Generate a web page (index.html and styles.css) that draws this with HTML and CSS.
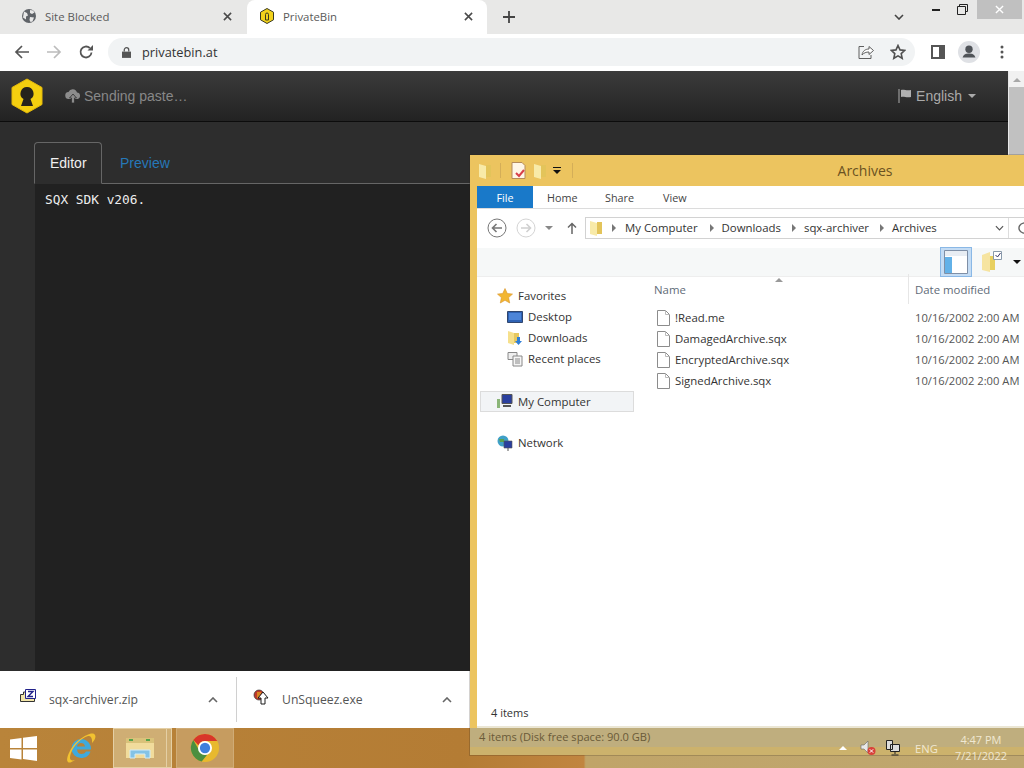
FILE: index.html
```html
<!DOCTYPE html>
<html lang="en">
<head>
<meta charset="utf-8">
<title>PrivateBin</title>
<link rel="stylesheet" href="styles.css">
</head>
<body>
<div class="screen">
  <div class="chrome">
    <div class="tabstrip">
      <div class="tab tab-bg">
        <svg class="fav" viewBox="0 0 16 16"><circle cx="8" cy="8" r="7" fill="#5f6368"/><path d="M3 3.500l3 1.500 1 2.500-2 1v3l-3-2zM9 2l3 .5 1.500 2-2.500 1.500-2-1zM9 9l4 .5-1.500 4-2 .5-1-2z" fill="#e8e8e8"/></svg>
        <span class="tab-title">Site Blocked</span>
        <svg class="tab-x" viewBox="0 0 10 10"><path d="M1 1l8 8M9 1l-8 8" stroke="#4a4a4a" stroke-width="1.700"/></svg>
      </div>
      <div class="tab tab-active">
        <svg class="fav" viewBox="0 0 16 16"><path d="M8 .5l6.500 3.700v7.600L8 15.500 1.500 11.800V4.200z" fill="#f2d21b" stroke="#3a3a20"/><path d="M6.500 12V6.500a1.500 1.500 0 0 1 3 0V12z" fill="none" stroke="#3a3a20"/></svg>
        <span class="tab-title">PrivateBin</span>
        <svg class="tab-x" viewBox="0 0 10 10"><path d="M1 1l8 8M9 1l-8 8" stroke="#4a4a4a" stroke-width="1.700"/></svg>
      </div>
      <svg class="new-tab" viewBox="0 0 12 12"><path d="M6 0v12M0 6h12" stroke="#444" stroke-width="1.800"/></svg>
      <div class="spacer"></div>
      <svg class="tab-menu" viewBox="0 0 10 6"><path d="M1 1l4 4 4-4" fill="none" stroke="#444" stroke-width="1.600"/></svg>
      <div class="win-controls">
        <span class="wc wc-min"><i class="wc-min-bar"></i></span>
        <span class="wc wc-max"><svg viewBox="0 0 11 11" class="wc-max-icon"><path d="M2.500 2.500V.5h8v7h-2M.5 2.500h8v8h-8z" fill="none" stroke="#222"/></svg></span>
        <span class="wc wc-close"><svg viewBox="0 0 10 10" class="wc-close-icon"><path d="M1 1l8 8M9 1l-8 8" stroke="#fff" stroke-width="1.500"/></svg></span>
      </div>
    </div>
    <div class="toolbar">
      <svg class="tb-ico" viewBox="0 0 16 16"><path d="M15 8H2M8 2L2 8l6 6" fill="none" stroke="#555" stroke-width="1.700"/></svg>
      <svg class="tb-ico" viewBox="0 0 16 16"><path d="M1 8h13M8 2l6 6-6 6" fill="none" stroke="#bcbcbc" stroke-width="1.700"/></svg>
      <svg class="tb-ico" viewBox="0 0 16 16"><path d="M13.500 8.500A5.500 5.500 0 1 1 11.800 4" fill="none" stroke="#555" stroke-width="1.800"/><path d="M9.500 6.500H15V1z" fill="#555"/></svg>
      <div class="omnibox">
        <svg class="lock" viewBox="0 0 10 12"><path d="M0 5h10v7H0z" fill="#555"/><path d="M2.500 5V3.200a2.500 2.500 0 0 1 5 0V5" fill="none" stroke="#555" stroke-width="1.400"/></svg>
        <span class="url">privatebin.at</span>
        <div class="spacer"></div>
        <svg class="omni-ico" viewBox="0 0 16 16"><path d="M6 2.500H1v12h12V11" fill="none" stroke="#5f5f5f"/><path d="M4 11c.500-4 3.500-6 7-6V2.500L15.500 6.500 11 10.500V8c-3 0-5 .8-7 3z" fill="#fff" stroke="#5f5f5f"/></svg>
        <svg class="omni-ico" viewBox="0 0 16 16"><path d="M8 1.500l2 4.400 4.700.5-3.500 3.200 1 4.700L8 11.900l-4.200 2.400 1-4.700L1.300 6.400 6 5.900z" fill="none" stroke="#505050" stroke-width="1.600"/></svg>
      </div>
      <svg class="side-ico" viewBox="0 0 14 14"><path d="M0 0h14v14H0z" fill="#555"/><path d="M2 2h6v10H2z" fill="#fff"/></svg>
      <span class="avatar"><svg viewBox="0 0 24 24" class="avatar-ico"><circle cx="12" cy="9" r="4" fill="#4f5358"/><path d="M5 18c1-4 4-4.500 7-4.500s6 .5 7 4.500z" fill="#4f5358"/></svg></span>
      <svg class="dots" viewBox="0 0 4 14"><circle cx="2" cy="2" r="1.500" fill="#555"/><circle cx="2" cy="7" r="1.500" fill="#555"/><circle cx="2" cy="12" r="1.500" fill="#555"/></svg>
    </div>
    <div class="viewport">
      <div class="page">
        <div class="navbar">
          <svg class="logo" viewBox="0 0 34 36"><path d="M17 1l15 8.500v17L17 35 2 26.500v-17z" fill="#f4cf0f" stroke="#e4b90a"/><path d="M17 9a6.500 6.500 0 0 1 3.500 12l2.500 7H11l2.500-7A6.500 6.500 0 0 1 17 9z" fill="#26231c"/></svg>
          <svg class="nav-cloud" viewBox="0 0 16 14"><path d="M4 10a3.500 3.500 0 0 1-.5-7A4.500 4.500 0 0 1 12 3.500 3.300 3.300 0 0 1 12.500 10z" fill="#8c8c8c"/><path d="M8 5l3.500 4H9.500v5h-3V9H4.500z" fill="#8c8c8c" stroke="#2e2e2e" stroke-width=".8"/></svg>
          <span class="nav-status">Sending paste…</span>
          <div class="spacer"></div>
          <svg class="nav-flag" viewBox="0 0 14 14"><path d="M1 0v14" stroke="#999" stroke-width="1.200"/><path d="M3 1c3-1 5 1 10 0v7c-5 1-7-1-10 0z" fill="#b0b0b0"/></svg>
          <span class="nav-lang">English</span>
          <i class="caret"></i>
        </div>
        <div class="main">
          <div class="tabs">
            <span class="p-tab p-tab-active">Editor</span>
            <span class="p-tab p-tab-link">Preview</span>
          </div>
          <div class="editor">SQX SDK v206.</div>
        </div>
      </div>
      <div class="scrollbar">
        <i class="sb-up"></i>
        <i class="sb-thumb"></i>
      </div>
    </div>
  </div>
  <div class="downloads">
    <div class="dl dl-first">
      <svg class="dl-ico" viewBox="0 0 16 16"><path d="M.5 5.500h3V3h11v9.500H.5z" fill="#f3e6a8" stroke="#333"/><path d="M5.500.5h10v9h-10z" fill="#fff" stroke="#22228a"/><path d="M8 2.500h5L8 7.500h5" fill="none" stroke="#22228a" stroke-width="1.400"/></svg>
      <span class="dl-name">sqx-archiver.zip</span>
      <div class="spacer"></div>
      <svg class="dl-chev" viewBox="0 0 10 6"><path d="M1 5l4-4 4 4" fill="none" stroke="#666" stroke-width="1.600"/></svg>
    </div>
    <div class="dl dl-second">
      <svg class="dl-ico" viewBox="0 0 16 16"><circle cx="6" cy="6" r="5" fill="#c0392b" stroke="#333" stroke-width=".7"/><path d="M4 4h4M4 6h3M4 8h4" stroke="#f2d21b"/><path d="M10 3l5 6h-3v6H8V9H5z" fill="#fff" stroke="#1a1a1a"/></svg>
      <span class="dl-name">UnSqueez.exe</span>
      <div class="spacer"></div>
      <svg class="dl-chev" viewBox="0 0 10 6"><path d="M1 5l4-4 4 4" fill="none" stroke="#666" stroke-width="1.600"/></svg>
    </div>
  </div>
  <div class="taskbar">
    <svg class="start" viewBox="0 0 27 25"><path d="M0 3.500L11.500 2v10H0zM13 1.800L27 0v12H13zM0 13.500h11.500v10L0 22zM13 13.500h14V25l-14-2z" fill="#fff"/></svg>
    <svg class="tb-ie" viewBox="0 0 32 32"><path d="M16 7a10 10 0 0 1 10 10.500H12c.3 3 2 4.500 4.500 4.500 2 0 3.500-.8 4.500-2.500h4.500C24 24 20.500 26 16 26A9.500 9.500 0 0 1 16 7zm-4 7.500h8c-.2-2.500-2-3.500-4-3.500s-3.700 1.200-4 3.500z" fill="#3fa9dc"/><path d="M3 30C0 27 6 14 14 8s14-8 16-5c1.500 2.500-1 6-3 8 .5-3-.500-7-3-7-5 0-18 10-19 22 0 2 2 3 5 2-3 2-6 3.500-7 2z" fill="#f2c230"/></svg>
    <div class="tb-btn tb-explorer">
      <svg class="tb-folder" viewBox="0 0 30 28"><path d="M1 4h28v20H1z" fill="#f1dc9c"/><path d="M1 4h28v5H1z" fill="#d9c27a"/><path d="M4 6h4M21 6h4" stroke="#53a34a" stroke-width="2"/><path d="M5 24v-8h20v8h-5v-4H10v4z" fill="#84c3e6" stroke="#d3ecf7"/></svg>
    </div>
    <i class="tb-sliver"></i>
    <div class="tb-btn tb-chrome">
      <svg class="tb-chrome-ico" viewBox="0 0 32 32"><circle cx="16" cy="16" r="15" fill="#e8b92e"/><path d="M16 1a15 15 0 0 1 13 7.500H16a7.500 7.500 0 0 0-7 4.500L3.500 7.500A15 15 0 0 1 16 1z" fill="#d8362a"/><path d="M3.500 7.500L10 19a7.500 7.500 0 0 0 8.500 4L12.500 30.500A15 15 0 0 1 3.500 7.500z" fill="#4b8f3f"/><circle cx="16" cy="16" r="7.500" fill="#fff"/><circle cx="16" cy="16" r="5.500" fill="#3f7fdc"/></svg>
    </div>
    <div class="spacer"></div>
    <div class="tray">
      <i class="tray-up"></i>
      <svg class="tray-ico" viewBox="0 0 16 16"><path d="M1 5h3l4-4v12L4 9H1z" fill="#e8e8e8" stroke="#666" stroke-width=".6"/><circle cx="11.500" cy="11" r="4" fill="#d8413a"/><path d="M9.800 9.300l3.400 3.400M13.200 9.300l-3.400 3.400" stroke="#fff"/></svg>
      <svg class="tray-ico" viewBox="0 0 16 16"><path d="M1.500.5h6v9h-6zM5.500 4.500h9v7h-9z" fill="#ddd" stroke="#222"/><path d="M10 11.500v2.500M6.500 15h7" stroke="#222"/></svg>
      <span class="tray-lang">ENG</span>
      <div class="tray-clock"><span>4:47 PM</span><span>7/21/2022</span></div>
    </div>
  </div>
  <div class="explorer">
    <div class="ex-title">
      <div class="qat">
        <svg class="qat-ico" viewBox="0 0 14 16"><path d="M1 1l7 2v13l-7-2z" fill="#f8eaa8"/><path d="M8 2h5v12H8z" fill="#e3c45a"/></svg>
        <i class="qat-sep qat-sep-a"></i>
        <svg class="qat-doc" viewBox="0 0 15 17"><path d="M1 .5h10l3 3v13H1z" fill="#fff6e6" stroke="#b58b5a"/><path d="M5 11l3 3 5-6" fill="none" stroke="#d8404a" stroke-width="2"/></svg>
        <svg class="qat-ico qat-folder2" viewBox="0 0 14 16"><path d="M1 1l7 2v13l-7-2z" fill="#f8eaa8"/><path d="M8 2h5v12H8z" fill="#e3c45a"/></svg>
        <svg class="qat-drop" viewBox="0 0 8 7"><path d="M0 0h8v1H0zM0 3h8L4 7z" fill="#111"/></svg>
        <i class="qat-sep qat-sep-b"></i>
      </div>
      <span class="ex-title-text">Archives</span>
    </div>
    <div class="ex-inner">
      <div class="ribbon">
        <span class="rb-tab rb-file">File</span>
        <span class="rb-tab">Home</span>
        <span class="rb-tab">Share</span>
        <span class="rb-tab">View</span>
      </div>
      <div class="addr-row">
        <svg class="ab-back" viewBox="0 0 20 20"><circle cx="10" cy="10" r="9" fill="#fff" stroke="#777"/><path d="M15 10H6M9.500 6L5.500 10l4 4" fill="none" stroke="#777" stroke-width="1.600"/></svg>
        <svg class="ab-fwd" viewBox="0 0 20 20"><circle cx="10" cy="10" r="9" fill="#fff" stroke="#d4d4d4"/><path d="M5 10h9M10.500 6l4 4-4 4" fill="none" stroke="#d0d0d0" stroke-width="1.600"/></svg>
        <i class="ab-drop"></i>
        <svg class="ab-up" viewBox="0 0 10 12"><path d="M5 12V1.500M1 5.500l4-4 4 4" fill="none" stroke="#666" stroke-width="1.500"/></svg>
        <div class="addr">
          <svg class="addr-folder" viewBox="0 0 14 16"><path d="M1 1l7 2v13l-7-2z" fill="#f8eaa8"/><path d="M8 2h5v12H8z" fill="#e3c45a"/></svg>
          <i class="crumb-arrow crumb-arrow-first"></i><span class="crumb crumb-first">My Computer</span>
          <i class="crumb-arrow"></i><span class="crumb">Downloads</span>
          <i class="crumb-arrow"></i><span class="crumb">sqx-archiver</span>
          <i class="crumb-arrow"></i><span class="crumb">Archives</span>
          <div class="spacer"></div>
          <svg class="addr-chev" viewBox="0 0 10 6"><path d="M1 1l4 4 4-4" fill="none" stroke="#555" stroke-width="1.300"/></svg>
          <i class="addr-div"></i>
          <svg class="addr-refresh" viewBox="0 0 14 14"><path d="M12 7a5 5 0 1 1-1.500-3.500" fill="none" stroke="#666" stroke-width="1.400"/><path d="M8.500 4.500H13V0z" fill="#666"/></svg>
        </div>
      </div>
      <div class="cmd-row">
        <span class="layout-btn"><svg viewBox="0 0 24 24" class="layout-ico"><path d="M.5 .5h23v23H.5z" fill="#fff" stroke="#7f8fa6"/><path d="M1 1h22v5H1z" fill="#e8edf3"/><path d="M1 7h7v16H1z" fill="#62b1e8"/></svg></span>
        <svg class="opt-ico" viewBox="0 0 22 24"><path d="M1 5l8-3v20l-8-2z" fill="#f6e4a0"/><path d="M9 6h5v14H9z" fill="#e8d060"/><path d="M12.500 1.500h8v8h-8z" fill="#fff" stroke="#8899aa"/><path d="M14.500 5l2 2 3-4" fill="none" stroke="#336" /></svg>
        <i class="opt-drop"></i>
      </div>
      <div class="ex-body">
        <div class="ex-nav">
          <div class="nav-row nav-top"><svg class="nav-ico" viewBox="0 0 16 16"><path d="M8 .5l2.300 5 5.200.6-3.900 3.500 1.100 5.400L8 12.300 3.300 15l1.100-5.400L.5 6.100l5.200-.6z" fill="#f2b632" stroke="#d9932a" stroke-width=".6"/></svg>Favorites</div>
          <div class="nav-row nav-sub"><svg class="nav-ico" viewBox="0 0 16 16"><path d="M.5 2.500h15v11H.5z" fill="#2e62b4" stroke="#30466e"/><path d="M2 4h12v7H2z" fill="#4d85d8"/></svg>Desktop</div>
          <div class="nav-row nav-sub"><svg class="nav-ico" viewBox="0 0 16 16"><path d="M1 1l6 2v12l-6-2z" fill="#f6e08c"/><path d="M7 3h5v10H7z" fill="#e6c860"/><path d="M10 7h3v4h2l-3.500 4L8 11h2z" fill="#2f7fd8"/></svg>Downloads</div>
          <div class="nav-row nav-sub"><svg class="nav-ico" viewBox="0 0 16 16"><path d="M1 1.500h9v7H1z" fill="#eee" stroke="#888"/><path d="M6 5h9v10H6z" fill="#f5f5f5" stroke="#888"/><path d="M8 8h5M8 10h5M8 12h5" stroke="#888"/></svg>Recent places</div>
          <div class="nav-row nav-top nav-group nav-selected"><svg class="nav-ico" viewBox="0 0 16 16"><path d="M5 1.500h10v9H5z" fill="#2a3f9e" stroke="#555"/><path d="M0 6h3v9H0z" fill="#8ab578"/><path d="M6 13h8" stroke="#555" stroke-width="2"/></svg>My Computer</div>
          <div class="nav-row nav-top nav-group"><svg class="nav-ico" viewBox="0 0 16 16"><circle cx="6" cy="6" r="5.500" fill="#3fa0c8"/><path d="M2 4h5v3H3z" fill="#5aa050"/><path d="M7 6h8v7H7z" fill="#2a3f9e" stroke="#555" stroke-width=".6"/><path d="M11 13v3" stroke="#555"/></svg>Network</div>
        </div>
        <div class="ex-files">
          <div class="col-head">
            <span class="col-name">Name</span>
            <i class="sort-mark"></i>
            <span class="col-date">Date modified</span>
          </div>
          <div class="file-row"><svg class="file-ico" viewBox="0 0 13 16"><path d="M.5 .5h8l4 4v11H.5z" fill="#fff" stroke="#8c8c8c"/><path d="M8.500 .5v4h4" fill="none" stroke="#bbb"/></svg><span class="file-name">!Read.me</span><span class="file-date">10/16/2002 2:00 AM</span></div>
          <div class="file-row"><svg class="file-ico" viewBox="0 0 13 16"><path d="M.5 .5h8l4 4v11H.5z" fill="#fff" stroke="#8c8c8c"/><path d="M8.500 .5v4h4" fill="none" stroke="#bbb"/></svg><span class="file-name">DamagedArchive.sqx</span><span class="file-date">10/16/2002 2:00 AM</span></div>
          <div class="file-row"><svg class="file-ico" viewBox="0 0 13 16"><path d="M.5 .5h8l4 4v11H.5z" fill="#fff" stroke="#8c8c8c"/><path d="M8.500 .5v4h4" fill="none" stroke="#bbb"/></svg><span class="file-name">EncryptedArchive.sqx</span><span class="file-date">10/16/2002 2:00 AM</span></div>
          <div class="file-row"><svg class="file-ico" viewBox="0 0 13 16"><path d="M.5 .5h8l4 4v11H.5z" fill="#fff" stroke="#8c8c8c"/><path d="M8.500 .5v4h4" fill="none" stroke="#bbb"/></svg><span class="file-name">SignedArchive.sqx</span><span class="file-date">10/16/2002 2:00 AM</span></div>
        </div>
      </div>
      <div class="ex-count">4 items</div>
    </div>
    <div class="ex-status">4 items (Disk free space: 90.0 GB)</div>
    <div class="ex-foot"></div>
  </div>
</div>
</body>
</html>
```
FILE: styles.css
```css
* { box-sizing: border-box; }
html, body { margin: 0; padding: 0; }
body { width: 1024px; height: 768px; overflow: hidden; background: #000; }
i { display: block; font-style: normal; }
svg { display: block; flex: none; }
.spacer { flex: 1; }
.screen { position: relative; width: 1024px; height: 768px; overflow: hidden; display: flex; flex-direction: column; font-family: "Open Sans", "Noto Sans", sans-serif; }

.chrome { height: 671px; display: flex; flex-direction: column; flex: none; }
.tabstrip { height: 34px; background: #e8e8e7; display: flex; align-items: flex-start; flex: none; }
.tab { height: 34px; display: flex; align-items: center; font-size: 11.400px; color: #5a5a5a; width: 240px; flex: none; }
.tab-bg { width: 247px; padding: 0 15px 2px 21px; }
.tab-active { width: 240px; background: #fff; border-radius: 8px 8px 0 0; padding: 0 14px 2px 12px; }
.fav { width: 16px; height: 16px; }
.tab-title { margin-left: 8px; flex: 1; }
.tab-x { width: 9px; height: 9px; }
.new-tab { width: 12px; height: 12px; margin: 11px 0 0 16px; }
.tab-menu { width: 10px; height: 6px; margin: 14px 19px 0 0; }
.win-controls { display: flex; height: 19px; margin-right: 2px; }
.wc { display: flex; align-items: center; justify-content: center; height: 19px; width: 26px; flex: none; }
.wc-close { width: 45px; margin-left: 2px; background: #c0c0c0; }
.wc-min-bar { width: 8px; height: 2px; background: #222; }
.wc-max-icon { width: 11px; height: 11px; }
.wc-close-icon { width: 9px; height: 9px; }

.toolbar { height: 37px; background: #fff; display: flex; align-items: center; flex: none; padding: 0 0 1px 14px; }
.tb-ico { width: 16px; height: 16px; margin-right: 16px; }
.omnibox { margin-left: -2px; flex: none; width: 807px; height: 28px; border-radius: 14px; background: #f1f3f4; display: flex; align-items: center; padding: 0 9px 0 14px; }
.lock { width: 9px; height: 11px; }
.url { margin-left: 11px; font-size: 12.800px; color: #333; }
.omni-ico { width: 16px; height: 16px; margin-left: 16px; }
.side-ico { width: 14px; height: 14px; margin-left: 16px; }
.avatar { width: 22px; height: 22px; border-radius: 50%; background: #dfe1e5; margin-left: 13px; flex: none; display: block; }
.avatar-ico { width: 22px; height: 22px; }
.dots { width: 4px; height: 14px; margin-left: 20px; }

.viewport { flex: 1; display: flex; min-height: 0; }
.page { flex: 1; background: #2d2d2d; display: flex; flex-direction: column; }
.navbar { height: 51px; flex: none; background: linear-gradient(#3b3b3b, #222222); border-bottom: 1px solid #0c0c0c; display: flex; align-items: center; padding: 0 32px 0 10px; font-family: "Liberation Sans", Arial, sans-serif; font-size: 14px; color: #888; }
.logo { width: 34px; height: 36px; }
.nav-cloud { width: 16px; height: 14px; margin-left: 21px; }
.nav-status { margin-left: 3px; }
.nav-flag { width: 14px; height: 14px; }
.nav-lang { margin-left: 4px; color: #aaa; }
.caret { width: 0; height: 0; border: 4px solid transparent; border-top-color: #aaa; border-bottom: 0; margin-left: 6px; }
.main { flex: 1; padding: 20px 0 0 34px; display: flex; flex-direction: column; min-height: 0; }
.tabs { display: flex; height: 42px; flex: none; border-bottom: 1px solid #666; font-family: "Liberation Sans", Arial, sans-serif; font-size: 14px; }
.p-tab { height: 42px; display: flex; align-items: center; padding: 0 15px; }
.p-tab-active { width: 68px; border: 1px solid #666; border-bottom-color: #2d2d2d; border-radius: 4px 4px 0 0; color: #f0f0f0; }
.p-tab-link { color: #2678b8; padding-left: 18px; }
.editor { flex: 1; background: #212121; margin-left: 1px; padding: 7px 10px; font-family: "DejaVu Sans Mono", monospace; font-size: 12.800px; color: #eeeeee; line-height: 17px; }
.scrollbar { width: 16px; flex: none; background: #f1f1f1; display: flex; flex-direction: column; align-items: center; border-left: 1px solid #e8e8e8; }
.sb-up { width: 0; height: 0; border: 4px solid transparent; border-bottom-color: #a8a8a8; border-top: 0; margin-top: 7px; }
.sb-thumb { width: 15px; height: 120px; background: #c1c1c1; margin-top: 5px; }

.downloads { height: 57px; flex: none; background: #fff; display: flex; align-items: center; }
.dl { width: 236px; height: 45px; display: flex; align-items: center; flex: none; font-size: 12.200px; color: #555; padding: 0 18px 0 20px; }
.dl-second { border-left: 1px solid #d0d0d0; width: 234px; padding-left: 16px; }
.dl-ico { width: 16px; height: 16px; margin-top: -6px; }
.dl-name { margin-left: 13px; }
.dl-chev { width: 10px; height: 6px; }

.taskbar { height: 40px; flex: none; background: linear-gradient(90deg, #b9843a 0, #b47c34 45%, #c18540 57%, #c0a468 57.200%, #bfa770 100%); display: flex; align-items: center; }
.start { width: 27px; height: 25px; margin-left: 10px; }
.tb-ie { width: 32px; height: 32px; margin-left: 28px; }
.tb-btn { height: 40px; display: flex; align-items: center; justify-content: center; flex: none; }
.tb-explorer { width: 54px; margin-left: 16px; background: #cfae74; border: 1px solid #e4cfa5; }
.tb-folder { width: 30px; height: 28px; }
.tb-sliver { width: 5px; height: 40px; background: #cfae74; border: 1px solid #e4cfa5; border-left: 0; }
.tb-chrome { width: 58px; margin-left: 4px; background: #c69c60; border: 1px solid #d0ac76; }
.tb-chrome-ico { width: 30px; height: 30px; }
.tray { position: relative; z-index: 2; display: flex; align-items: center; color: #f0e8d2; font-size: 11px; padding-right: 17px; }
.tray-up { width: 0; height: 0; border: 4px solid transparent; border-bottom-color: #fff; border-top: 0; margin-right: 13px; }
.tray-ico { width: 16px; height: 16px; margin-right: 9px; }
.tray-lang { margin: 0 17px 0 5px; font-size: 11.200px; }
.tray-clock { display: flex; flex-direction: column; align-items: center; line-height: 16px; }

.explorer { position: absolute; left: 470px; top: 155px; width: 790px; height: 600px; background: #ecc45f; display: flex; flex-direction: column; box-shadow: 0 0 0 1px rgba(40,30,20,.2); }
.ex-title { height: 31px; flex: none; display: flex; align-items: center; justify-content: center; position: relative; }
.qat { position: absolute; left: 8px; top: 7px; display: flex; align-items: center; }
.qat-ico { width: 14px; height: 16px; }
.qat-doc { width: 15px; height: 17px; margin-left: 10px; }
.qat-folder2 { margin-left: 7px; }
.qat-sep { width: 1px; height: 15px; background: #d4ae58; }
.qat-sep-a { margin-left: 8px; }
.qat-sep-b { margin-left: 11px; }
.qat-drop { width: 8px; height: 7px; margin-left: 6px; }
.ex-title-text { font-size: 14px; color: #6a5222; }
.ex-inner { margin: 0 0 0 7px; background: #fff; height: 542px; flex: none; border-bottom: 2px solid #ebe6d4; display: flex; flex-direction: column; font-size: 11.400px; color: #333; }
.ribbon { height: 23px; flex: none; display: flex; align-items: stretch; background: #fff; border-bottom: 1px solid #dcdcdc; }
.rb-tab { display: flex; align-items: center; padding: 0 0 0 14px; width: 57px; font-size: 10.800px; color: #444; }
.rb-tab + .rb-tab { width: 58px; }
.rb-file { width: 56px; background: #1979c9; color: #fff; justify-content: center; padding: 0; }
.addr-row { height: 39px; flex: none; display: flex; align-items: center; padding: 0 0 2px 10px; }
.ab-back { width: 20px; height: 20px; }
.ab-fwd { width: 20px; height: 20px; margin-left: 9px; }
.ab-drop { width: 0; height: 0; border: 4px solid transparent; border-top-color: #888; border-bottom: 0; margin-left: 9px; }
.ab-up { width: 10px; height: 12px; margin-left: 14px; }
.addr { width: 452px; height: 22px; border: 1px solid #d2d2d2; margin-left: 8px; display: flex; align-items: center; padding-left: 3px; color: #333; }
.addr-folder { width: 14px; height: 16px; }
.crumb-arrow { width: 0; height: 0; border: 4px solid transparent; border-left-color: #777; border-right: 0; margin: 0 8px 0 11px; }
.crumb-arrow-first { margin: 0 9px; }
.crumb { font-size: 11.400px; }
.crumb-first { margin-right: 1px; }
.addr-chev { width: 9px; height: 6px; }
.addr-div { width: 1px; height: 20px; background: #ddd; margin-left: 4px; }
.addr-refresh { width: 14px; height: 14px; margin: 0 5px 0 8px; }
.cmd-row { height: 29px; flex: none; width: 100%; padding-right: 239px; background: #f6f8f8; border-bottom: 1px solid #eee; display: flex; align-items: center; justify-content: flex-end; }
.layout-btn { width: 32px; height: 30px; background: #c4dcf4; border: 1px solid #8ab8e6; display: flex; align-items: center; justify-content: center; }
.layout-ico { width: 24px; height: 24px; }
.opt-ico { width: 22px; height: 24px; margin-left: 9px; }
.opt-drop { width: 0; height: 0; border: 4px solid transparent; border-top-color: #111; border-bottom: 0; margin-left: 10px; }
.ex-body { flex: 1; display: flex; min-height: 0; }
.ex-nav { width: 163px; flex: none; padding: 9px 0 0 3px; color: #333; }
.nav-row { height: 21px; display: flex; align-items: center; width: 154px; padding-bottom: 2px; }
.nav-top { padding-left: 17px; }
.nav-sub { padding-left: 27px; }
.nav-ico { width: 16px; height: 16px; margin-right: 5px; }
.nav-group { margin-top: 21px; }
.nav-selected { background: #f2f4f6; border: 1px solid #dcdcdc; padding-left: 16px; padding-bottom: 1px; }
.ex-files { flex: 1; display: flex; flex-direction: column; }
.col-head { height: 24px; position: relative; display: flex; align-items: center; color: #5f6b78; margin-bottom: 7px; }
.col-name { margin-left: 14px; width: 254px; }
.col-date { border-left: 1px solid #e6e6e6; padding-left: 6px; height: 30px; display: flex; align-items: center; }
.sort-mark { position: absolute; left: 135px; top: 1px; width: 0; height: 0; border: 4px solid transparent; border-bottom-color: #999; border-top: 0; }
.file-row { height: 21px; display: flex; align-items: center; padding: 0 0 2px 17px; }
.file-ico { width: 13px; height: 16px; margin-right: 5px; }
.file-name { width: 240px; }
.file-date { color: #555; font-size: 11.200px; }
.ex-count { height: 27px; flex: none; display: flex; align-items: center; padding-left: 14px; font-size: 11px; color: #333; }
.ex-status { height: 19px; flex: none; background: #bfae7e; font-size: 11.100px; color: #6a5a38; padding-left: 9px; line-height: 18px; }
.ex-foot { flex: 1; background: #ccb26c; }
```
